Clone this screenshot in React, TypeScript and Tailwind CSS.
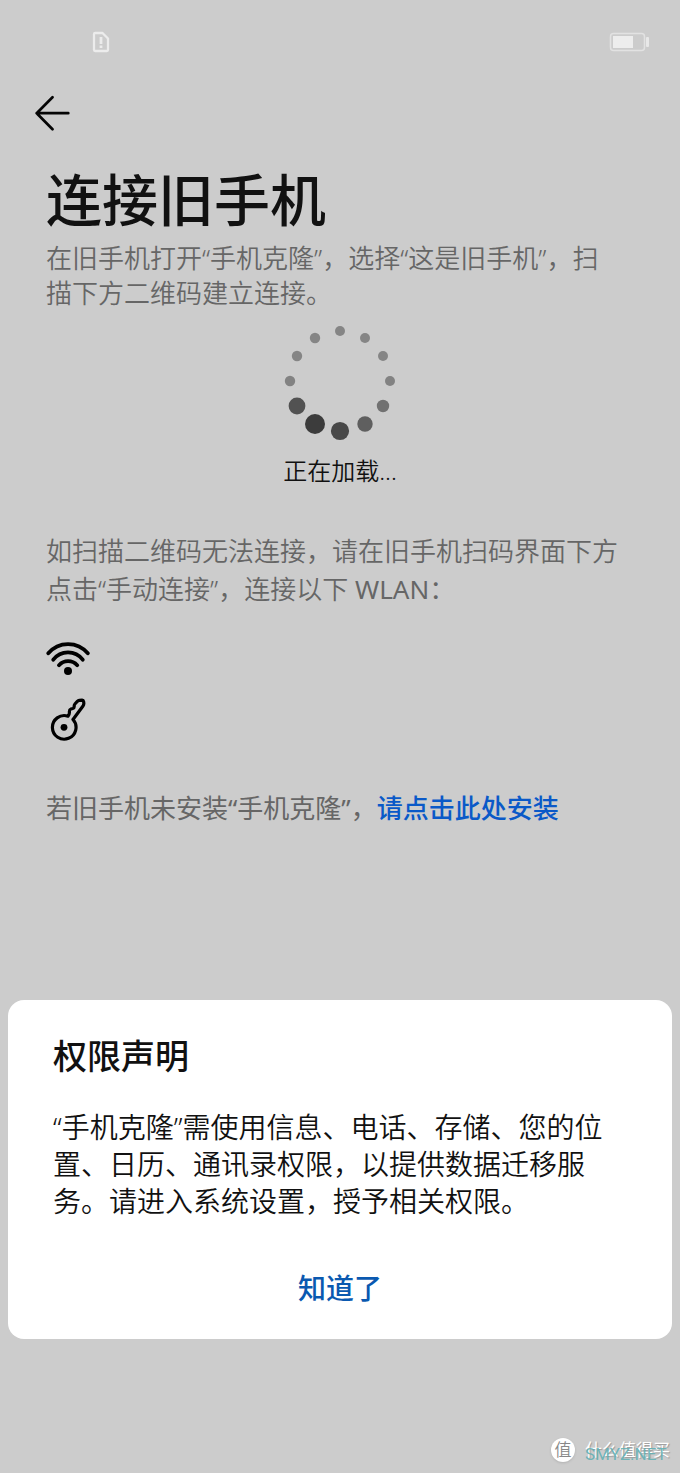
// ============================================================================
// Connect Old Phone Screen
// Loading state for the QR code, WLAN details and the permission notice
// ============================================================================

const SPINNER_DOTS = [
  { cx: 60, cy: 10, r: 5, fill: "#858585" },
  { cx: 85, cy: 17, r: 5, fill: "#858585" },
  { cx: 103, cy: 35, r: 5, fill: "#858585" },
  { cx: 110, cy: 60, r: 5, fill: "#828282" },
  { cx: 103, cy: 85, r: 6.2, fill: "#717171" },
  { cx: 85, cy: 103, r: 7.7, fill: "#5f5f5f" },
  { cx: 60, cy: 110, r: 9.1, fill: "#484848" },
  { cx: 35, cy: 103, r: 10, fill: "#3c3c3c" },
  { cx: 17, cy: 85, r: 8.4, fill: "#525252" },
  { cx: 10, cy: 60, r: 5.2, fill: "#828282" },
  { cx: 17, cy: 35, r: 5.2, fill: "#858585" },
  { cx: 35, cy: 17, r: 5.2, fill: "#858585" },
];

// ============================================================================
// ICONS
// ============================================================================

const SimAlertIcon = () => (
  <svg width="18" height="22" viewBox="0 0 18 22" fill="none" aria-hidden="true">
    <path
      d="M3.2 2H10.5L16 7.5V18.8Q16 20 14.8 20H3.2Q2 20 2 18.8V3.2Q2 2 3.2 2Z"
      stroke="#ececec"
      strokeWidth="2.3"
      strokeLinejoin="round"
    />
    <path d="M9 6V13M9 14.6V17" stroke="#ececec" strokeWidth="2.8" />
  </svg>
);

const BatteryIcon = () => (
  <svg width="40" height="20" viewBox="0 0 40 20" fill="none" aria-hidden="true">
    <rect x="1.5" y="1.5" width="34" height="17" rx="3" stroke="#e2e2e2" strokeWidth="1.5" />
    <rect x="4" y="4" width="20" height="12" fill="#ededed" />
    <rect x="37" y="5" width="3" height="10" rx="1" fill="#e8e8e8" />
  </svg>
);

const BackIcon = () => (
  <svg width="36" height="36" viewBox="0 0 36 36" fill="none" aria-hidden="true">
    <path
      d="M18.5 2.3L2.7 18.2L18.5 34.2M2.7 18.2H34.3"
      stroke="#050505"
      strokeWidth="2.7"
      strokeLinecap="round"
      strokeLinejoin="round"
    />
  </svg>
);

const WifiIcon = () => (
  <svg width="44" height="36" viewBox="0 0 44 36" fill="none" aria-hidden="true">
    <path
      d="M2.3 13.3A25.7 25.7 0 0 1 41.8 13.3M7.3 19.7A18.5 18.5 0 0 1 36.7 19.7M13 25.2A12.4 12.4 0 0 1 31.2 25.2"
      stroke="#000"
      strokeWidth="3.8"
      strokeLinecap="round"
    />
    <circle cx="22" cy="31" r="4" fill="#000" />
  </svg>
);

const KeyIcon = () => (
  <svg width="40" height="46" viewBox="0 0 40 46" fill="none" aria-hidden="true">
    <path
      d="M25 23.5L35 10Q36 8.6 35.8 7L35.6 5.4Q35.4 4.2 34.2 4.2L31.2 4.4Q30.2 4.5 29.3 5.4L26.9 8Q26 9 26.2 10.4Q26.3 12 24.7 12.5L22.9 13Q21.2 13.6 21.4 16Q21.6 18.2 20 20.2A11.8 11.8 0 1 0 25 23.5"
      stroke="#000"
      strokeWidth="3.2"
      strokeLinecap="round"
      strokeLinejoin="round"
    />
    <circle cx="16" cy="31.3" r="3.4" fill="#000" />
  </svg>
);

// ============================================================================
// SECTIONS
// ============================================================================

const StatusBar = () => (
  <div className="flex items-center justify-between pt-[31px] pr-[31px] pl-[92px]">
    <SimAlertIcon />
    <BatteryIcon />
  </div>
);

const LoadingSpinner = () => (
  <div className="mt-2.5 flex flex-col items-center gap-3.5" role="status">
    <svg width="120" height="120" viewBox="0 0 120 120" aria-hidden="true">
      {SPINNER_DOTS.map((dot) => (
        <circle key={`${dot.cx}-${dot.cy}`} cx={dot.cx} cy={dot.cy} r={dot.r} fill={dot.fill} />
      ))}
    </svg>
    <p className="text-2xl leading-8 text-[#111]">正在加载...</p>
  </div>
);

const PermissionNotice = () => (
  <section
    role="dialog"
    aria-labelledby="notice-title"
    className="mx-2 mt-auto rounded-2xl bg-white px-[45px] pt-9 pb-[31px] text-[#111]"
  >
    <h2 id="notice-title" className="text-[34px] leading-10 font-medium">
      权限声明
    </h2>
    <p className="mt-[33px] text-[28px] leading-[37px]">
      “手机克隆”需使用信息、电话、存储、您的位
      <br />
      置、日历、通讯录权限，以提供数据迁移服
      <br />
      务。请进入系统设置，授予相关权限。
    </p>
    <div className="mt-12 flex justify-center">
      <button type="button" className="text-[28px] leading-10 font-medium text-[#0a59b0]">
        知道了
      </button>
    </div>
  </section>
);

const Watermark = () => (
  <footer className="mt-[99px] flex h-[35px] items-start justify-end gap-2.5 pr-2.5">
    <span className="flex h-6 w-6 items-center justify-center rounded-full bg-white text-[17px] leading-6 text-[#888] shadow-sm">
      值
    </span>
    <div className="relative text-[17px] leading-6 font-normal whitespace-nowrap">
      <span className="text-white [text-shadow:1px_1px_1px_#999]">什么值得买</span>
      <span className="absolute top-1 left-0 font-[Roboto,sans-serif] text-[#62b0b5]/90">
        SMYZ.NET
      </span>
    </div>
  </footer>
);

// ============================================================================
// APP
// ============================================================================

const App = () => {
  return (
    <div
      lang="zh-CN"
      className="flex min-h-screen flex-col bg-[#cccccc] font-[Noto_Sans,'Noto_Sans_CJK_SC',sans-serif] font-[350] [text-spacing-trim:space-all]"
    >
      <StatusBar />

      <header className="mt-[42px] px-[34px]">
        <button type="button" aria-label="返回" className="block">
          <BackIcon />
        </button>
      </header>

      <main className="px-[46px] pb-12 text-[26px] leading-[38px] text-[#666]">
        <h1 className="mt-9 text-[56px] leading-[64px] font-medium text-[#111]">
          连接旧手机
        </h1>
        <p className="mt-2.5 leading-[35px]">
          在旧手机打开“手机克隆”，选择“这是旧手机”，扫
          <br />
          描下方二维码建立连接。
        </p>

        <LoadingSpinner />

        <p className="mt-[45px]">
          如扫描二维码无法连接，请在旧手机扫码界面下方
          <br />
          点击“手动连接”，连接以下 <span className="font-normal">WLAN</span>：
        </p>

        {/* WLAN name and password */}
        <div className="mt-8 flex flex-col gap-5">
          <WifiIcon />
          <div className="pl-0.5">
            <KeyIcon />
          </div>
        </div>

        <p className="mt-[47px] font-normal">
          若旧手机未安装“手机克隆”，
          <a href="#install" className="font-medium text-[#0a59c8]">
            请点击此处安装
          </a>
        </p>
      </main>

      <PermissionNotice />
      <Watermark />
    </div>
  );
};

export default App;
